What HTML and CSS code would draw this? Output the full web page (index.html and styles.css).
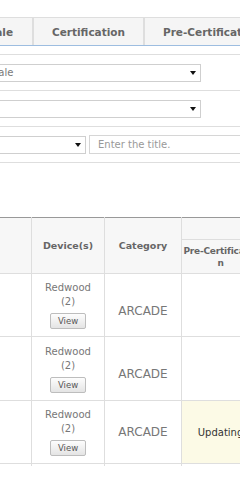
FILE: index.html
```html
<!DOCTYPE html>
<html lang="en">

<head>
    <meta charset="UTF-8">
    <meta name="viewport" content="width=device-width, initial-scale=1.0">
    <title>Game List</title>
    <link rel="stylesheet" href="styles.css">
</head>

<body>
    <div class="tabs">
        <div class="tab tabFirst">Wholesale</div>
        <div class="tab">Certification</div>
        <div class="tab tabWide">Pre-Certification</div>
    </div>

    <div class="filter">
        <div class="filterRow">
            <div class="sel selWide"><span>Sale</span><i class="arrow"></i></div>
        </div>
        <div class="filterRow">
            <div class="sel selWide"><span></span><i class="arrow"></i></div>
        </div>
        <div class="filterRow">
            <div class="sel selShort"><span></span><i class="arrow"></i></div>
            <input class="titleInput" type="text" placeholder="Enter the title.">
        </div>
    </div>

    <table class="list">
        <colgroup>
            <col class="cNo">
            <col class="cDevice">
            <col class="cCategory">
            <col class="cPre">
            <col class="cMore">
            <col class="cMore">
        </colgroup>
        <thead>
            <tr class="headTop">
                <th rowspan="2"></th>
                <th rowspan="2">Device(s)</th>
                <th rowspan="2">Category</th>
                <th colspan="3"></th>
            </tr>
            <tr class="headSub">
                <th class="breakAll">Pre-Certification</th>
                <th></th>
                <th></th>
            </tr>
        </thead>
        <tbody>
            <tr class="row63">
                <td></td>
                <td class="device">
                    <p>Redwood</p>
                    <p>(2)</p>
                    <button class="viewBtn">View</button>
                </td>
                <td class="category low">ARCADE</td>
                <td></td>
                <td></td>
                <td></td>
            </tr>
            <tr class="row64">
                <td></td>
                <td class="device">
                    <p>Redwood</p>
                    <p>(2)</p>
                    <button class="viewBtn">View</button>
                </td>
                <td class="category low">ARCADE</td>
                <td></td>
                <td></td>
                <td></td>
            </tr>
            <tr class="row63">
                <td></td>
                <td class="device">
                    <p>Redwood</p>
                    <p>(2)</p>
                    <button class="viewBtn">View</button>
                </td>
                <td class="category">ARCADE</td>
                <td class="updating">Updating</td>
                <td class="updating"></td>
                <td></td>
            </tr>
            <tr class="tail">
                <td></td>
                <td></td>
                <td></td>
                <td></td>
                <td></td>
                <td></td>
            </tr>
        </tbody>
    </table>
</body>

</html>
```

FILE: styles.css
```css
body {
    margin: 0;
    overflow: hidden;
    background-color: #fff;
    font-family: "DejaVu Sans", Verdana, sans-serif;
    color: #777;
}

/* ---------------- tabs ---------------- */
.tabs {
    display: flex;
    margin: 17px 0 0 -78px;
    border-bottom: 1px solid #9dbde0;
    width: 500px;
}

.tab {
    display: flex;
    flex: none;
    justify-content: center;
    align-items: center;
    box-sizing: border-box;
    width: 111px;
    height: 28px;
    border: 1px solid #dedede;
    border-bottom: none;
    background-color: #f5f5f5;
    font-size: 10.5px;
    font-weight: bold;
    color: #666;
    white-space: nowrap;
}

.tabFirst {
    justify-content: flex-end;
    padding-right: 19px;
}

.tabWide {
    width: 150px;
    justify-content: flex-start;
    padding-left: 18px;
}

/* ---------------- filter ---------------- */
.filter {
    margin-top: 8px;
    border-top: 1px solid #dedede;
}

.filterRow {
    display: flex;
    align-items: center;
    height: 35px;
    border-bottom: 1px solid #dedede;
}

.sel {
    display: flex;
    flex: none;
    align-items: center;
    justify-content: space-between;
    box-sizing: border-box;
    height: 18px;
    margin-left: -13px;
    padding: 0 4px;
    border: 1px solid #cfcfcf;
    background-color: #fff;
    font-size: 10px;
    color: #7a7a7a;
}

.selWide {
    width: 214px;
}

.selShort {
    width: 99px;
}

.arrow {
    width: 0;
    height: 0;
    border-left: 3.5px solid transparent;
    border-right: 3.5px solid transparent;
    border-top: 4px solid #111;
}

.titleInput {
    box-sizing: border-box;
    flex: none;
    width: 200px;
    height: 19px;
    margin: 0 0 0 3px;
    padding: 0 8px;
    border: 1px solid #d6d6d6;
    font-family: "DejaVu Sans", Verdana, sans-serif;
    font-size: 10px;
    color: #555;
}

.titleInput::placeholder {
    color: #999;
}

/* ---------------- table ---------------- */
.list {
    margin: 54px 0 0 -29px;
    table-layout: fixed;
    width: 448px;
    border-collapse: collapse;
    border-top: 1px solid #999;
}

.cNo {
    width: 60px;
}

.cDevice {
    width: 73px;
}

.cCategory {
    width: 77px;
}

.cPre {
    width: 78px;
}

.cMore {
    width: 80px;
}

.list th,
.list td {
    padding: 0 1px;
    border: 1px solid #dedede;
    text-align: center;
    vertical-align: middle;
}

.list th {
    background-color: #f7f7f7;
    font-size: 9.5px;
    font-weight: bold;
    color: #666;
    line-height: 12px;
}

.list .headTop th {
    border-top: 1px solid #999;
}

.headTop {
    height: 22px;
}

.headSub {
    height: 34px;
}

.list .breakAll {
    padding: 0;
    font-size: 9px;
    letter-spacing: -0.2px;
    word-break: break-all;
}

.row63 {
    height: 63px;
}

.row64 {
    height: 64px;
}

.tail td {
    height: 2px;
    padding: 0;
    border-bottom: none;
}

.device p {
    margin: 0;
    font-size: 10px;
    line-height: 14px;
    color: #777;
}

.viewBtn {
    box-sizing: border-box;
    width: 36px;
    height: 16px;
    margin-top: 1px;
    padding: 0;
    border: 1px solid #bdbdbd;
    border-radius: 2px;
    background: linear-gradient(#fdfdfd, #e4e4e4);
    font-family: "DejaVu Sans", Verdana, sans-serif;
    font-size: 8.5px;
    color: #555;
}

.category {
    font-size: 12px;
    color: #777;
}

.list .low {
    padding-top: 11px;
}

.updating {
    background-color: #fcfae6;
    font-size: 10px;
    color: #333;
}
```
